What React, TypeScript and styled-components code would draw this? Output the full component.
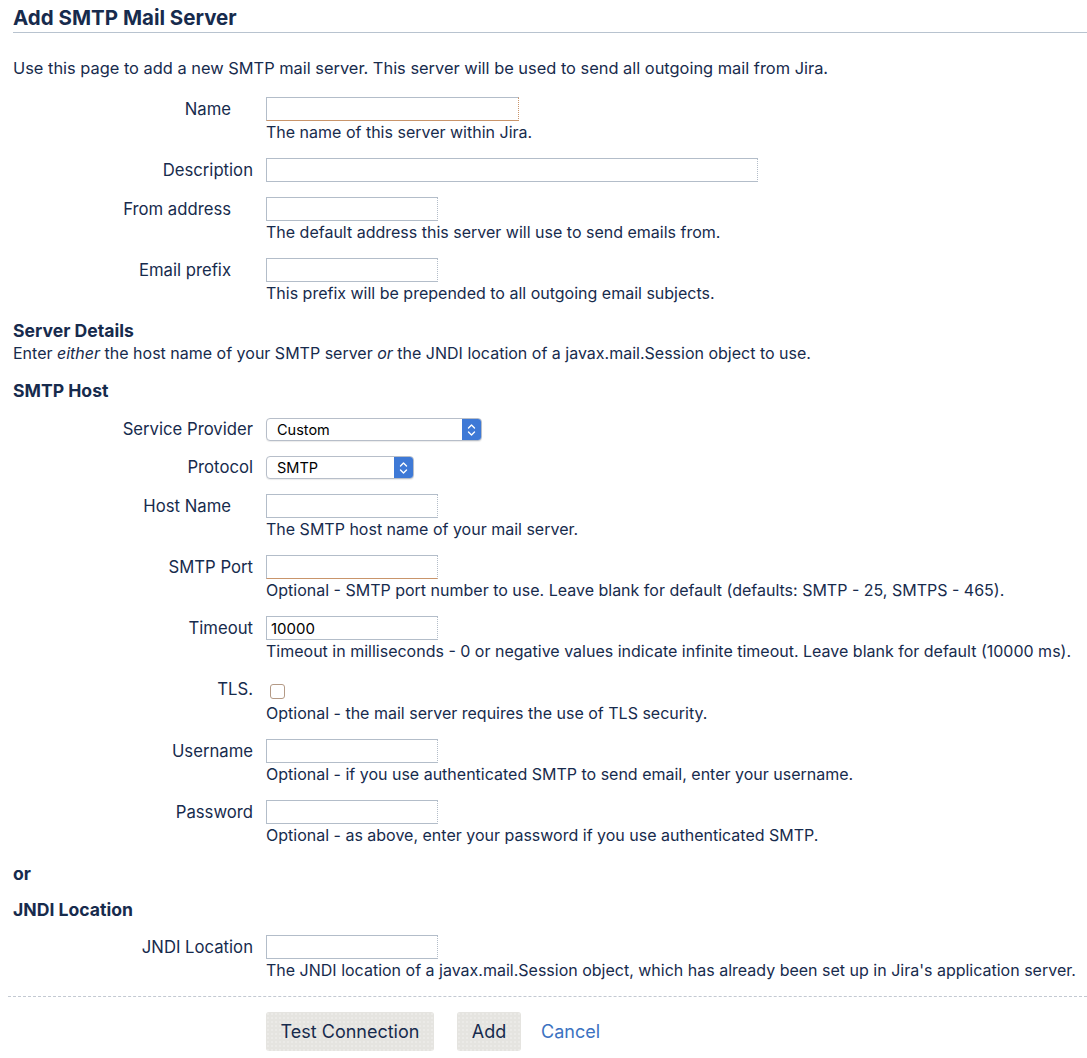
import React from "react";
import styled, { createGlobalStyle } from "styled-components";

const GlobalStyle = createGlobalStyle`
  html, body { margin: 0; padding: 0; background: #ffffff; }
  body {
    font-family: Inter, "Open Sans", "Liberation Sans", sans-serif;
    font-size: 16px;
    color: #172b4d;
  }
  * { box-sizing: border-box; }
`;

const Page = styled.div`
  width: 1087px;
`;

const Header = styled.h2`
  margin: 0 0 0 13px;
  padding: 7px 0 3px 0;
  font-size: 20.5px;
  line-height: 22px;
  font-weight: 700;
  color: #172b4d;
  border-bottom: 1px solid #b8c3cf;
`;

const Intro = styled.p`
  margin: 24px 0 0 13px;
  font-size: 16.4px;
  line-height: 22px;
`;

const Form = styled.div`
  display: flex;
  flex-direction: column;
  padding-left: 13px;
  margin-top: 18px;
`;

const Row = styled.div<{ $gap?: number }>`
  display: grid;
  grid-template-columns: 240px 1fr;
  column-gap: 13px;
  margin-bottom: ${(p) => p.$gap ?? 15}px;
`;

const Label = styled.label<{ $required?: boolean; $h?: number }>`
  text-align: right;
  font-size: 16.7px;
  line-height: ${(p) => p.$h ?? 24}px;
  padding-right: ${(p) => (p.$required ? 22 : 0)}px;
  white-space: nowrap;
`;

const Control = styled.div`
  display: flex;
  flex-direction: column;
  align-items: flex-start;
`;

const TextInput = styled.input<{ $w: number; $warm?: boolean; $warmRight?: boolean }>`
  width: ${(p) => p.$w}px;
  height: 24px;
  margin: 0;
  padding: 0 4px;
  font-family: inherit;
  font-size: 15px;
  color: #000;
  border: 1px solid #b3bdc9;
  border-right-style: dotted;
  border-bottom-color: ${(p) => (p.$warm ? "#c9956b" : "#b3bdc9")};
  border-right-color: ${(p) => (p.$warmRight ? "#c9956b" : "#b3bdc9")};
  border-radius: 0;
  outline: none;
  background: #fff;
`;

const Desc = styled.div`
  line-height: 22px;
  white-space: nowrap;
`;

const SectionTitle = styled.h3<{ $mt?: number }>`
  margin: ${(p) => p.$mt ?? 0}px 0 0 0;
  font-size: 17.6px;
  line-height: 22px;
  font-weight: 700;
`;

const SectionText = styled.p`
  margin: 0 0 16px 0;
  line-height: 22px;
`;

const Spacer = styled.div<{ $h: number }>`
  height: ${(p) => p.$h}px;
`;

const SelectBox = styled.div<{ $w: number }>`
  display: flex;
  width: ${(p) => p.$w}px;
  height: 23px;
  border: 1px solid #b7bec9;
  border-radius: 4px;
  background: #fff;
  overflow: hidden;
  box-shadow: 0 1px 1px rgba(0, 0, 0, 0.08);
`;

const SelectValue = styled.span`
  flex: 1;
  padding-left: 10px;
  font-size: 14.5px;
  line-height: 21px;
  color: #000;
`;

const Stepper = styled.span`
  width: 19px;
  display: flex;
  align-items: center;
  justify-content: center;
  background: #3e79d6;
`;

const CheckLine = styled.div`
  height: 25px;
  display: flex;
  align-items: center;
`;

const Checkbox = styled.span`
  width: 15px;
  height: 15px;
  margin-left: 4px;
  margin-top: 3px;
  border: 1px solid #b49a86;
  border-radius: 3px;
  background: #fff;
`;

const Divider = styled.hr`
  margin: 15px 0 0 8px;
  border: none;
  border-top: 1px dashed #c3c9d2;
  height: 0;
`;

const Actions = styled.div`
  display: flex;
  align-items: center;
  padding-left: 266px;
  margin-top: 15px;
`;

const Button = styled.button<{ $w: number }>`
  width: ${(p) => p.$w}px;
  height: 39px;
  margin-right: 23px;
  border: none;
  border-radius: 3px;
  font-family: inherit;
  font-size: 18px;
  color: #172b4d;
  background-color: #e5e4e0;
  background-image: radial-gradient(rgba(255, 255, 255, 0.5) 0.6px, transparent 0.8px);
  background-size: 4px 4px;
  cursor: pointer;
`;

const CancelLink = styled.a`
  margin-left: -3px;
  font-size: 18px;
  color: #3c72c1;
  text-decoration: none;
`;

const StepIcon = () => (
  <svg width="9" height="14" viewBox="0 0 9 14" fill="none" stroke="#fff" strokeWidth="1.4" strokeLinecap="round" strokeLinejoin="round">
    <path d="M1.5 5 L4.5 2 L7.5 5" />
    <path d="M1.5 9 L4.5 12 L7.5 9" />
  </svg>
);

type FieldProps = {
  label: string;
  required?: boolean;
  width?: number;
  value?: string;
  desc?: string;
  warm?: boolean;
  warmRight?: boolean;
  gap?: number;
};

const Field = ({ label, required, width = 172, value, desc, warm, warmRight, gap }: FieldProps) => (
  <Row $gap={gap}>
    <Label $required={required}>{label}</Label>
    <Control>
      <TextInput $w={width} $warm={warm} $warmRight={warmRight} defaultValue={value} />
      {desc && <Desc>{desc}</Desc>}
    </Control>
  </Row>
);

const SelectField = ({ label, width, value }: { label: string; width: number; value: string }) => (
  <Row>
    <Label $h={23}>{label}</Label>
    <Control>
      <SelectBox $w={width}>
        <SelectValue>{value}</SelectValue>
        <Stepper>
          <StepIcon />
        </Stepper>
      </SelectBox>
    </Control>
  </Row>
);

export default function App() {
  return (
    <Page>
      <GlobalStyle />
      <Header>Add SMTP Mail Server</Header>
      <Intro>
        Use this page to add a new SMTP mail server. This server will be used to send all outgoing mail from Jira.
      </Intro>
      <Form>
        <Field label="Name" required width={253} desc="The name of this server within Jira." warm warmRight />
        <Field label="Description" width={492} />
        <Field label="From address" required desc="The default address this server will use to send emails from." />
        <Field label="Email prefix" required desc="This prefix will be prepended to all outgoing email subjects." gap={16} />

        <SectionTitle>Server Details</SectionTitle>
        <SectionText>
          Enter <em>either</em> the host name of your SMTP server <em>or</em> the JNDI location of a javax.mail.Session
          object to use.
        </SectionText>

        <SectionTitle>SMTP Host</SectionTitle>
        <Spacer $h={16} />
        <SelectField label="Service Provider" width={216} value="Custom" />
        <SelectField label="Protocol" width={148} value="SMTP" />
        <Field label="Host Name" required desc="The SMTP host name of your mail server." />
        <Field
          label="SMTP Port"
          desc="Optional - SMTP port number to use. Leave blank for default (defaults: SMTP - 25, SMTPS - 465)."
          warm
        />
        <Field
          label="Timeout"
          value="10000"
          desc="Timeout in milliseconds - 0 or negative values indicate infinite timeout. Leave blank for default (10000 ms)."
        />
        <Row>
          <Label $h={25}>TLS.</Label>
          <Control>
            <CheckLine>
              <Checkbox />
            </CheckLine>
            <Desc>Optional - the mail server requires the use of TLS security.</Desc>
          </Control>
        </Row>
        <Field label="Username" desc="Optional - if you use authenticated SMTP to send email, enter your username." />
        <Field
          label="Password"
          desc="Optional - as above, enter your password if you use authenticated SMTP."
          gap={17}
        />

        <SectionTitle>or</SectionTitle>
        <SectionTitle $mt={14}>JNDI Location</SectionTitle>
        <Spacer $h={14} />
        <Field
          label="JNDI Location"
          gap={0}
          desc="The JNDI location of a javax.mail.Session object, which has already been set up in Jira's application server."
        />
      </Form>
      <Divider />
      <Actions>
        <Button $w={168}>Test Connection</Button>
        <Button $w={64}>Add</Button>
        <CancelLink href="#">Cancel</CancelLink>
      </Actions>
    </Page>
  );
}
